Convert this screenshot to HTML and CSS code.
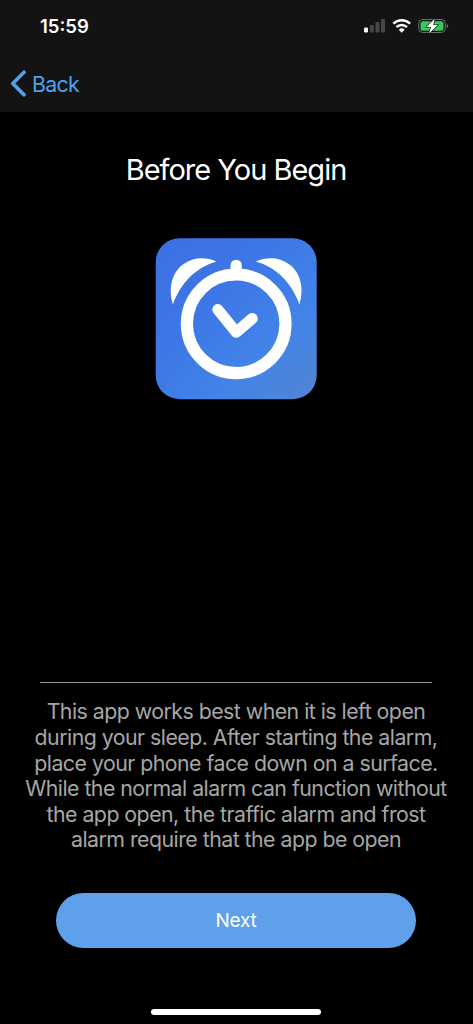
FILE: index.html
```html
<!DOCTYPE html>
<html lang="en">
<head>
<meta charset="utf-8">
<title>Before You Begin</title>
<link rel="stylesheet" href="styles.css">
</head>
<body>
<div class="screen">
  <header class="header">
    <div class="status">
      <span class="time">15:59</span>
      <svg class="indicators" width="86" height="20" viewBox="0 0 86 20">
        <rect x="0" y="11.5" width="4" height="5" rx="1.2" fill="#fff"/>
        <g fill="#47474a">
          <rect x="5.8" y="9" width="4" height="7.5" rx="1"/>
          <rect x="11.5" y="6" width="4" height="10.500" rx="1"/>
          <rect x="17" y="3" width="4" height="13.500" rx="1"/>
        </g>
        <g fill="none" stroke="#fff" stroke-width="2.500">
          <path d="M29.300 7.700a12 12 0 0 1 16.800 0"/>
          <path d="M32.400 11.200a7.600 7.600 0 0 1 10.600 0"/>
        </g>
        <path d="M34.800 13.700a4.200 4.200 0 0 1 5.800 0L37.700 16.800Z" fill="#fff"/>
        <rect x="54.700" y="3.500" width="26.600" height="13" rx="4" fill="none" stroke="#6e6e72"/>
        <rect x="56.500" y="5.200" width="23" height="9.600" rx="2.500" fill="#35cb59"/>
        <path d="M82.700 8v4q1.600-.5 1.600-2t-1.600-2Z" fill="#6e6e72"/>
        <path d="M70.700 2.800L62.300 11H67L65 17.400 73.900 9H69.200Z" fill="#fff" stroke="#131313" stroke-width="1.200" paint-order="stroke"/>
      </svg>
    </div>
    <a class="back" href="#">
      <svg width="17" height="28" viewBox="0 0 17 28"><path d="M14 2.300L2.800 13.500l11.200 11.200" fill="none" stroke="#4da3ec" stroke-width="3.700" stroke-linecap="round" stroke-linejoin="round"/></svg>
      <span>Back</span>
    </a>
  </header>
  <main class="content">
    <h1 class="title">Before You Begin</h1>
    <svg class="app-icon" width="162" height="162" viewBox="0 0 162 162">
      <defs>
        <linearGradient id="blue" x1="0" y1="0" x2="1" y2="1">
          <stop offset="0" stop-color="#3c70e4"/>
          <stop offset=".35" stop-color="#3d76e6"/>
          <stop offset=".7" stop-color="#4284e8"/>
          <stop offset="1" stop-color="#5284d0"/>
        </linearGradient>
      </defs>
      <rect x=".700" y=".200" width="161" height="161" rx="24" fill="url(#blue)"/>
      <g fill="#fff">
        <path d="M17.900 66.300C13 50 17 34.500 28 26.500C38 19 50 18.700 61.500 23.400C41.500 29 26 44 17.900 66.300Z"/>
        <path d="M144.500 66.300C149.400 50 145.400 34.500 134.400 26.500C124.400 19 112.400 18.700 100.900 23.400C120.900 29 136.400 44 144.500 66.300Z"/>
        <rect x="75.500" y="21.700" width="11.300" height="20" rx="5.600"/>
      </g>
      <circle cx="81.200" cy="85.800" r="49.300" fill="none" stroke="#fff" stroke-width="12.200"/>
      <path d="M62.800 71.500L81.200 94.300 97.300 80.500" fill="none" stroke="#fff" stroke-width="11" stroke-linecap="round" stroke-linejoin="round"/>
    </svg>
    <hr class="divider">
    <p class="description">This app works best when it is left open<br>during your sleep. After starting the alarm,<br>place your phone face down on a surface.<br>While the normal alarm can function without<br>the app open, the traffic alarm and frost<br>alarm require that the app be open</p>
    <button class="next">Next</button>
  </main>
  <div class="home-indicator"></div>
</div>
</body>
</html>
```
FILE: styles.css
```css
* { box-sizing: border-box; }

body {
  margin: 0;
  background: #000;
  font-family: Inter, "Liberation Sans", sans-serif;
}

.screen {
  display: flex;
  flex-direction: column;
  width: 473px;
  height: 1024px;
  background: #000;
  overflow: hidden;
}

.header {
  height: 112px;
  background: #131313;
}

.status {
  display: flex;
  justify-content: space-between;
  align-items: center;
  height: 52px;
  padding: 0 23px 0 40px;
}

.time {
  color: #fff;
  font-size: 18.5px;
  font-weight: 600;
}

.indicators { display: block; }

.back {
  display: flex;
  align-items: center;
  gap: 5px;
  width: max-content;
  height: 60px;
  margin-top: 2px;
  padding-left: 10px;
  color: #4da3ec;
  font-size: 21.3px;
  letter-spacing: -0.7px;
  text-decoration: none;
}

.content {
  display: flex;
  flex: 1;
  flex-direction: column;
  align-items: center;
  padding-right: 1px;
}

.title {
  margin: 40px 0 0;
  color: #fff;
  font-size: 29px;
  font-weight: 400;
  letter-spacing: -1px;
  line-height: 36px;
}

.app-icon {
  display: block;
  margin-top: 50px;
  margin-right: 1px;
}

.divider {
  width: 392px;
  height: 1px;
  margin: 282px 0 0;
  border: 0;
  background: #969696;
}

.description {
  margin: 16.4px 0 0;
  color: #a6a6a6;
  font-size: 21.3px;
  letter-spacing: -0.52px;
  line-height: 25.6px;
  text-align: center;
  white-space: nowrap;
}

.next {
  width: 360px;
  height: 55px;
  margin-top: 39.6px;
  padding: 0;
  border: 0;
  border-radius: 28px;
  background: #5ea1ea;
  color: #fff;
  font: inherit;
  font-size: 19px;
  letter-spacing: -0.2px;
}

.home-indicator {
  width: 170px;
  height: 6px;
  margin: 0 152px 9px 151px;
  border-radius: 3px;
  background: #fff;
}
```
